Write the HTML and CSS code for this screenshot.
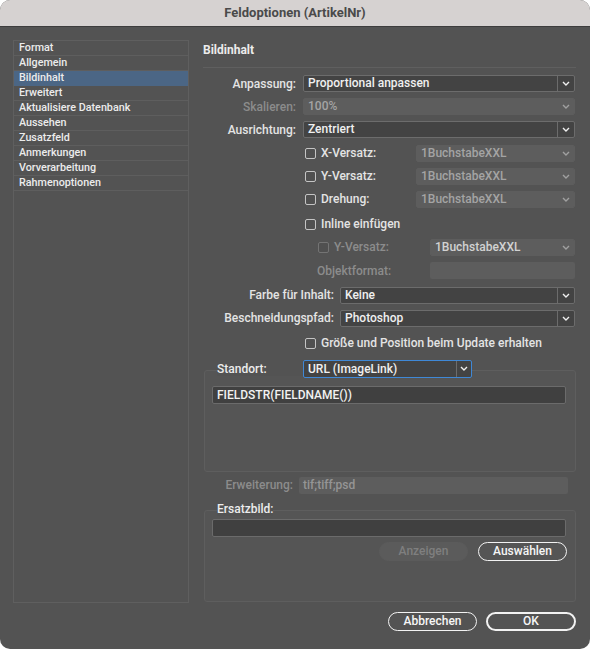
FILE: index.html
```html
<!DOCTYPE html>
<html lang="de">
<head>
<meta charset="utf-8">
<title>Feldoptionen (ArtikelNr)</title>
<link rel="stylesheet" href="styles.css">
</head>
<body>
<div class="window">
  <div class="titlebar">Feldoptionen (ArtikelNr)</div>
  <div class="body">
    <div class="columns">
      <ul class="sidebar">
        <li>Format</li>
        <li>Allgemein</li>
        <li class="active">Bildinhalt</li>
        <li>Erweitert</li>
        <li>Aktualisiere Datenbank</li>
        <li>Aussehen</li>
        <li>Zusatzfeld</li>
        <li>Anmerkungen</li>
        <li>Vorverarbeitung</li>
        <li>Rahmenoptionen</li>
      </ul>
      <div class="main">
        <div class="section-title">Bildinhalt</div>
        <div class="form">
          <div class="row">
            <span class="lbl w93">Anpassung:</span>
            <div class="select"><span class="val">Proportional anpassen</span><span class="arrow"><svg width="8" height="5" viewBox="0 0 8 5"><path d="M1 1l3 3 3-3"/></svg></span></div>
          </div>
          <div class="row">
            <span class="lbl w93 dis">Skalieren:</span>
            <div class="select disabled"><span class="val">100%</span><span class="arrow"><svg width="8" height="5" viewBox="0 0 8 5"><path d="M1 1l3 3 3-3"/></svg></span></div>
          </div>
          <div class="row">
            <span class="lbl w93">Ausrichtung:</span>
            <div class="select"><span class="val">Zentriert</span><span class="arrow"><svg width="8" height="5" viewBox="0 0 8 5"><path d="M1 1l3 3 3-3"/></svg></span></div>
          </div>
          <div class="row ind1">
            <span class="cb"></span><span class="cblbl w95">X-Versatz:</span>
            <div class="select disabled"><span class="val">1BuchstabeXXL</span><span class="arrow"><svg width="8" height="5" viewBox="0 0 8 5"><path d="M1 1l3 3 3-3"/></svg></span></div>
          </div>
          <div class="row ind1">
            <span class="cb"></span><span class="cblbl w95">Y-Versatz:</span>
            <div class="select disabled"><span class="val">1BuchstabeXXL</span><span class="arrow"><svg width="8" height="5" viewBox="0 0 8 5"><path d="M1 1l3 3 3-3"/></svg></span></div>
          </div>
          <div class="row ind1">
            <span class="cb"></span><span class="cblbl w95">Drehung:</span>
            <div class="select disabled"><span class="val">1BuchstabeXXL</span><span class="arrow"><svg width="8" height="5" viewBox="0 0 8 5"><path d="M1 1l3 3 3-3"/></svg></span></div>
          </div>
          <div class="row ind1 gapb">
            <span class="cb"></span><span class="cblbl">Inline einfügen</span>
          </div>
          <div class="row ind2">
            <span class="cb dis"></span><span class="cblbl dis w96">Y-Versatz:</span>
            <div class="select disabled bright"><span class="val">1BuchstabeXXL</span><span class="arrow"><svg width="8" height="5" viewBox="0 0 8 5"><path d="M1 1l3 3 3-3"/></svg></span></div>
          </div>
          <div class="row ind3">
            <span class="lbl dis w113 left">Objektformat:</span>
            <div class="field disabled"></div>
          </div>
          <div class="row gapb">
            <span class="lbl w131">Farbe für Inhalt:</span>
            <div class="select"><span class="val">Keine</span><span class="arrow"><svg width="8" height="5" viewBox="0 0 8 5"><path d="M1 1l3 3 3-3"/></svg></span></div>
          </div>
          <div class="row">
            <span class="lbl w131">Beschneidungspfad:</span>
            <div class="select"><span class="val">Photoshop</span><span class="arrow"><svg width="8" height="5" viewBox="0 0 8 5"><path d="M1 1l3 3 3-3"/></svg></span></div>
          </div>
          <div class="row ind1 gapb">
            <span class="cb"></span><span class="cblbl">Größe und Position beim Update erhalten</span>
          </div>
        </div>

        <div class="group standort">
          <div class="legend">
            <span class="legend-lbl w86">Standort:</span>
            <div class="select focus"><span class="val">URL (ImageLink)</span><span class="arrow"><svg width="8" height="5" viewBox="0 0 8 5"><path d="M1 1l3 3 3-3"/></svg></span></div>
          </div>
          <div class="field dark">FIELDSTR(FIELDNAME())</div>
        </div>

        <div class="row erw">
          <span class="lbl dis w90">Erweiterung:</span>
          <div class="field disabled">tif;tiff;psd</div>
        </div>

        <div class="group ersatz">
          <div class="legend">
            <span class="legend-lbl">Ersatzbild:</span>
          </div>
          <div class="field dark"></div>
          <div class="btnrow">
            <span class="btn disabled">Anzeigen</span>
            <span class="btn">Auswählen</span>
          </div>
        </div>
      </div>
    </div>
    <div class="footer">
      <span class="btn">Abbrechen</span>
      <span class="btn default">OK</span>
    </div>
  </div>
</div>
</body>
</html>
```

FILE: styles.css
```css
* { box-sizing: border-box; }
html, body { margin: 0; padding: 0; background: #ffffff; }
body {
  font-family: "Roboto", "Liberation Sans", sans-serif;
  font-size: 12px;
  color: #e4e4e4;
}
.window {
  width: 590px;
  height: 649px;
  border-radius: 10px;
  overflow: hidden;
  background: #535353;
}
.titlebar {
  height: 27px;
  background: #d6d2d1;
  border-bottom: 1px solid #3d3d3d;
  color: #4a4a4a;
  font-weight: 700;
  font-size: 13px;
  text-align: center;
  line-height: 26px;
}
.body {
  padding: 13px 14px 0 13px;
}
.columns {
  display: flex;
  height: 563px;
}
.sidebar {
  list-style: none;
  margin: 0;
  padding: 0;
  width: 176px;
  height: 563px;
  border: 1px solid #5f5f5f;
  flex: none;
}
.sidebar li {
  height: 15px;
  line-height: 14px;
  padding-left: 5px;
  border-bottom: 1px solid #5e5e5e;
  font-weight: 500;
  font-size: 10.75px;
  color: #ececec;
}
.sidebar li.active {
  background: #4b6685;
  border-bottom-color: #4b6685;
}
.main {
  flex: 1;
  margin-left: 14px;
  display: flex;
  flex-direction: column;
}
.section-title {
  flex: none;
  font-weight: 700;
  font-size: 12px;
  color: #ececec;
  height: 28px;
  line-height: 21px;
  border-bottom: 1px solid #5f5f5f;
}
.form {
  display: flex;
  flex-direction: column;
  padding-top: 7px;
}
.row {
  flex: none;
  display: flex;
  align-items: center;
  height: 17px;
  margin-bottom: 6.2px;
  font-weight: 500;
}
.row.gapb { margin-top: 1.5px; }
.ind1 { padding-left: 102px; }
.ind2 { padding-left: 115px; }
.ind3 { padding-left: 114px; }
.lbl {
  flex: none;
  text-align: right;
  margin-right: 7px;
  white-space: nowrap;
}
.lbl.left { text-align: left; margin-right: 0; }
.w93 { width: 93px; }
.w95 { width: 95px; }
.w96 { width: 96px; }
.w113 { width: 113px; }
.w131 { width: 131px; margin-right: 6px; }
.w90 { width: 90px; margin-right: 6px; }
.w86 { width: 86px; }
.dis { color: #8c8c8c; }
.cb {
  flex: none;
  width: 11px;
  height: 11px;
  border: 1px solid #c4c4c4;
  border-radius: 2px;
  background: #505050;
  margin-right: 5px;
}
.cb.dis { border-color: #747474; }
.cblbl { flex: none; white-space: nowrap; }
.select {
  flex: 1;
  margin-right: 1px;
  height: 17px;
  display: flex;
  border: 1px solid #6c6c6c;
  border-radius: 2px;
  background: #434343;
  color: #f0f0f0;
}
.select .val {
  flex: 1;
  padding-left: 4px;
  line-height: 15px;
  white-space: nowrap;
}
.select .arrow {
  flex: none;
  width: 17px;
  border-left: 1px solid #6c6c6c;
  display: flex;
  align-items: center;
  justify-content: center;
}
.select svg path {
  fill: none;
  stroke: #f0f0f0;
  stroke-width: 1.4;
}
.select.disabled {
  border-color: #5d5d5d;
  background: #5d5d5d;
  color: #a4a4a4;
}
.select.disabled .arrow { border-left-color: #5d5d5d; }
.select.disabled svg path { stroke: #a0a0a0; }
.select.bright { color: #d2d2d2; }
.select.focus {
  flex: none;
  width: 169px;
  height: 18px;
  border-color: #3f88d6;
}
.select.focus .val { line-height: 16px; }
.select.focus .arrow { width: 15px; }
.field {
  flex: 1;
  height: 17px;
  margin-right: 1px;
  border-radius: 2px;
  padding-left: 4px;
  line-height: 17px;
  white-space: nowrap;
}
.field.disabled {
  background: #5d5d5d;
  color: #959595;
}
.field.dark {
  flex: none;
  height: 18px;
  line-height: 16px;
  background: #404040;
  border: 1px solid #6b6b6b;
  color: #f2f2f2;
  margin: 0 9px 0 7px;
  font-weight: 500;
}
.group {
  flex: none;
  border: 1px solid #5e5e5e;
  border-radius: 3px;
  margin-left: 1px;
  background: #555555;
}
.legend {
  display: flex;
  align-items: center;
  height: 18px;
  margin-top: -11px;
  padding-left: 12px;
  font-weight: 500;
}
.legend-lbl {
  flex: none;
  color: #ececec;
  background: #535353;
}
.standort {
  margin-top: 12px;
  height: 102px;
}
.standort .field.dark { margin-top: 8px; }
.erw {
  margin: 5px 8px 0 0;
}
.erw .field { margin-right: 0; }
.ersatz {
  margin-top: 16px;
  height: 92px;
}
.ersatz .field.dark { margin-top: 1px; }
.btnrow {
  display: flex;
  justify-content: flex-end;
  gap: 10px;
  margin: 5px 8px 0 0;
}
.btn {
  width: 89px;
  height: 19px;
  border: 1.5px solid #f2f2f2;
  border-radius: 10px;
  text-align: center;
  line-height: 16px;
  color: #f6f6f6;
  font-weight: 500;
  font-size: 12px;
}
.btn.disabled {
  border-color: #5b5b5b;
  background: #5b5b5b;
  color: #7f7f7f;
}
.btn.default { width: 90px; border-width: 2px; line-height: 15px; }
.footer {
  display: flex;
  justify-content: flex-end;
  gap: 9px;
  margin-top: 9px;
}
```
